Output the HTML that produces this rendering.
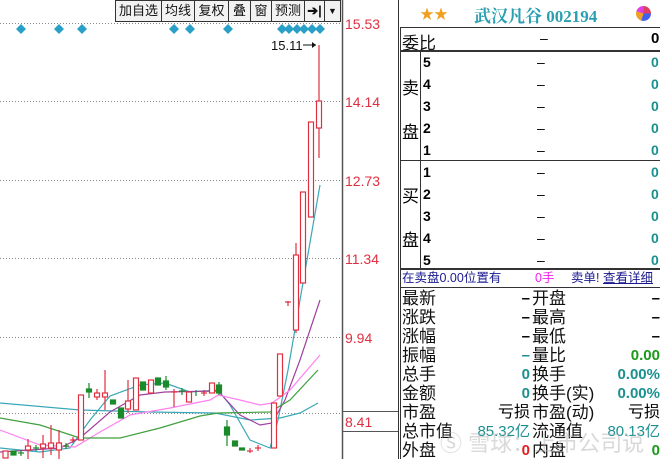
<!DOCTYPE html>
<html><head><meta charset="utf-8"><style>
*{margin:0;padding:0;box-sizing:border-box}
body{width:660px;height:459px;background:#fff;position:relative;overflow:hidden;font-family:"Liberation Sans","Noto Sans CJK SC",sans-serif}
.a{position:absolute;white-space:nowrap}
.btn{position:absolute;top:0;height:22px;border:1px solid #333;background:#f2f2f2;font-size:13px;line-height:20px;text-align:center;color:#111}
.ax{position:absolute;left:345px;font-size:14px;color:#e03040}
.ob{position:absolute;font-size:14px;font-weight:bold;line-height:22px}
.st{position:absolute;font-size:17px;line-height:19px;color:#111}
.v{position:absolute;font-size:15px;font-weight:bold;line-height:19px;text-align:right}
</style></head><body>
<svg class="a" style="left:0;top:0" width="400" height="459">
<g stroke="#888" stroke-dasharray="1,2" stroke-width="1">
<line x1="0" y1="23.5" x2="342" y2="23.5"/><line x1="0" y1="101.5" x2="342" y2="101.5"/><line x1="0" y1="180.5" x2="342" y2="180.5"/><line x1="0" y1="258.5" x2="342" y2="258.5"/><line x1="0" y1="337.5" x2="342" y2="337.5"/><line x1="0" y1="413.5" x2="342" y2="413.5"/>
</g>
<line x1="342.5" y1="0" x2="342.5" y2="459" stroke="#555" stroke-width="1.5"/>
<line x1="342" y1="411.5" x2="398" y2="411.5" stroke="#555"/><line x1="342" y1="431.5" x2="398" y2="431.5" stroke="#555"/>
<g fill="#2a9fc8">
<path d="M21 24l5 5-5 5-5-5z"/><path d="M59 24l5 5-5 5-5-5z"/><path d="M82 24l5 5-5 5-5-5z"/><path d="M174 24l5 5-5 5-5-5z"/><path d="M190 24l5 5-5 5-5-5z"/><path d="M228 24l5 5-5 5-5-5z"/><path d="M282 24l5 5-5 5-5-5z"/><path d="M289 24l5 5-5 5-5-5z"/><path d="M297 24l5 5-5 5-5-5z"/><path d="M304 24l5 5-5 5-5-5z"/><path d="M312 24l5 5-5 5-5-5z"/><path d="M320 24l5 5-5 5-5-5z"/>
</g>
<g fill="none" stroke-width="1.2">
<polyline stroke="#3aa8b8" points="0,403 80,410 150,412 215,413 250,420 280,418 300,413 318,403"/>
<polyline stroke="#3aa8b8" points="0,448 40,452 70,448 90,420 110,396 140,385 165,383 190,392 218,390 230,405 250,440 270,448 278,420 288,370 300,300 320,185"/>
<polyline stroke="#a040a0" points="0,452 60,448 80,438 110,412 140,395 165,392 218,391 240,415 260,425 272,423 285,400 300,360 320,300"/>
<polyline stroke="#ff80f0" points="0,430 40,445 75,447 100,432 130,415 170,408 210,400 218,395 240,400 260,405 272,403 290,390 320,355"/>
<polyline stroke="#40a040" points="0,418 40,425 80,438 120,438 160,428 200,416 218,413 270,412 290,400 318,370"/>
</g>
<g stroke="#e03040" fill="#fff" stroke-width="1.2">
<line x1="28" y1="439" x2="28" y2="459"/><rect x="25.5" y="446" width="5" height="4"/>
<line x1="43" y1="435" x2="43" y2="458"/><rect x="40.5" y="444" width="5" height="4"/>
<line x1="51" y1="425" x2="51" y2="455"/><rect x="48.5" y="443" width="5" height="5"/>
<line x1="59" y1="430" x2="59" y2="459"/><rect x="56.5" y="443" width="5" height="7"/>
<rect x="3" y="451" width="5" height="7"/><line x1="73" y1="437" x2="73" y2="443"/><line x1="70" y1="440" x2="76" y2="440"/>
<rect x="78.5" y="395" width="5" height="45"/>
<line x1="97" y1="389" x2="97" y2="400"/><rect x="94.5" y="393" width="5" height="4"/>
<line x1="105" y1="370" x2="105" y2="410"/><rect x="102.5" y="393" width="5" height="4"/>
<line x1="128" y1="380" x2="128" y2="413"/><rect x="125.5" y="401" width="5" height="8"/>
<rect x="133.5" y="378" width="5" height="32"/>
<rect x="148.5" y="380" width="5" height="13"/>
<line x1="174" y1="389" x2="174" y2="407"/><line x1="171" y1="392" x2="177" y2="392"/>
<rect x="186.5" y="392" width="5" height="10"/>
<line x1="204" y1="390" x2="204" y2="396"/><line x1="201" y1="393" x2="207" y2="393"/>
<rect x="209.5" y="383" width="5" height="10"/>
<line x1="250" y1="448" x2="250" y2="453"/><line x1="247" y1="451" x2="253" y2="451"/>
<line x1="258" y1="445" x2="258" y2="451"/><line x1="255" y1="448" x2="261" y2="448"/>
<rect x="271.5" y="403" width="5" height="45"/>
<rect x="277.5" y="354" width="5" height="42"/>
<line x1="288" y1="301" x2="288" y2="306"/><line x1="285" y1="302" x2="291" y2="302"/>
<line x1="296" y1="243" x2="296" y2="333"/><rect x="293.5" y="255" width="5" height="75"/>
<rect x="300.5" y="192" width="5" height="91"/>
<rect x="308.5" y="122" width="5" height="95"/>
<line x1="319" y1="45" x2="319" y2="158"/><rect x="316.5" y="101" width="5" height="27"/>
</g>
<g fill="#1a8a2a" stroke="#1a8a2a" stroke-width="1.2">
<rect x="11" y="451" width="5" height="4"/><line x1="21" y1="450" x2="21" y2="456"/><line x1="18" y1="453" x2="24" y2="453"/>
<line x1="36" y1="445" x2="36" y2="451"/><line x1="33" y1="448" x2="39" y2="448"/><line x1="66" y1="443" x2="66" y2="449"/><line x1="63" y1="446" x2="69" y2="446"/>
<line x1="89" y1="383" x2="89" y2="398"/><rect x="86.5" y="389" width="5" height="3"/>
<rect x="110.5" y="400" width="5" height="4"/><rect x="118.5" y="408" width="5" height="10"/>
<rect x="140.5" y="382" width="5" height="8"/><rect x="155.5" y="378" width="5" height="7"/><line x1="166" y1="376" x2="166" y2="390"/><rect x="163.5" y="381" width="5" height="6"/>
<line x1="182" y1="388" x2="182" y2="395"/><line x1="179" y1="391" x2="185" y2="391"/><line x1="196" y1="390" x2="196" y2="396"/>
<line x1="219" y1="382" x2="219" y2="395"/><rect x="216.5" y="385" width="5" height="8"/>
<line x1="227" y1="420" x2="227" y2="446"/><rect x="224.5" y="427" width="5" height="8"/>
<rect x="232.5" y="441" width="5" height="5"/><rect x="239.5" y="448" width="5" height="2"/>
</g>
<text x="271" y="50" font-size="13" fill="#111" font-family="Liberation Sans">15.11</text>
<line x1="303" y1="45" x2="316" y2="45" stroke="#111"/><path d="M316 45l-4-3v6z" fill="#111"/>
</svg>
<div class="btn" style="left:115px;width:47px">加自选</div>
<div class="btn" style="left:161px;width:34px">均线</div>
<div class="btn" style="left:194px;width:35px">复权</div>
<div class="btn" style="left:228px;width:23px">叠</div>
<div class="btn" style="left:250px;width:22px">窗</div>
<div class="btn" style="left:271px;width:34px">预测</div>
<div class="btn" style="left:304px;width:21px;font-weight:bold">➔|</div>
<div class="btn" style="left:324px;width:17px;font-size:9px">▼</div>
<div class="ax" style="top:16px">15.53</div>
<div class="ax" style="top:94px">14.14</div>
<div class="ax" style="top:173px">12.73</div>
<div class="ax" style="top:251px">11.34</div>
<div class="ax" style="top:330px">9.94</div>
<div class="ax" style="top:414px">8.41</div>
<div class="a" style="left:398px;top:0;width:1px;height:459px;background:#333"></div>
<div class="a" style="left:420px;top:4px;color:#f0a020;font-size:14px">★★</div>
<div class="a" style="left:474px;top:2px;color:#2a9fb0;font-size:17px;font-weight:bold;font-family:'Liberation Serif','Noto Serif CJK SC',serif">武汉凡谷 002194</div>
<div class="a" style="left:636px;top:6px;width:15px;height:15px;border-radius:50%;background:conic-gradient(#e04060 0 25%,#4060f0 0 55%,#f0a020 0 80%,#e040e0 0)"></div>
<div class="a" style="left:400px;top:27px;width:260px;height:432px;border-left:1px solid #333;border-top:1px solid #333"></div>
<div class="a" style="left:400px;top:50px;width:260px;height:2px;background:#333"></div>
<div class="a" style="left:400px;top:160px;width:260px;height:1px;background:#333"></div>
<div class="a" style="left:400px;top:268px;width:260px;height:2px;background:#333"></div>
<div class="a" style="left:400px;top:287px;width:260px;height:1px;background:#333"></div>
<div class="a" style="left:420px;top:52px;width:1px;height:216px;background:#333"></div>
<div class="a" style="left:402px;top:29px;font-size:17px;color:#111">委比</div>
<div class="a" style="left:540px;top:30px;font-size:14px">–</div>
<div class="a" style="left:651px;top:30px;font-size:15px;font-weight:bold">0</div>
<div class="a" style="left:402px;top:78px;font-size:17px;line-height:22px;width:18px">卖<br><br>盘</div>
<div class="a" style="left:402px;top:186px;font-size:17px;line-height:22px;width:18px">买<br><br>盘</div>
<div class="ob" style="left:423px;top:51px">5<br>4<br>3<br>2<br>1</div>
<div class="ob" style="left:423px;top:161px">1<br>2<br>3<br>4<br>5</div>
<div class="ob" style="left:537px;top:51px;font-weight:normal">–<br>–<br>–<br>–<br>–</div>
<div class="ob" style="left:537px;top:161px;font-weight:normal">–<br>–<br>–<br>–<br>–</div>
<div class="ob" style="left:651px;top:51px;color:#1a9090">0<br>0<br>0<br>0<br>0</div>
<div class="ob" style="left:651px;top:161px;color:#1a9090">0<br>0<br>0<br>0<br>0</div>
<div class="a" style="left:402px;top:270px;font-size:12.5px;color:#1a1a90;line-height:16px">在卖盘0.00位置有</div>
<div class="a" style="left:535px;top:270px;font-size:12.5px;color:#f020f0;line-height:16px">0手</div>
<div class="a" style="left:571px;top:270px;font-size:12.5px;color:#1a1a90;line-height:16px">卖单! <u>查看详细</u></div>
<div class="st" style="left:402px;top:289px">最新<br>涨跌<br>涨幅<br>振幅<br>总手<br>金额<br>市盈<br>总市值<br>外盘</div>
<div class="st" style="left:532px;top:289px">开盘<br>最高<br>最低<br>量比<br>换手<br>换手(实)<br>市盈(动)<br>流通值<br>内盘</div>
<div class="v" style="left:470px;top:289px;width:60px">–<br>–<br>–<br><span style="color:#1a9090">–</span><br><span style="color:#1a9090">0</span><br><span style="color:#1a9090">0</span><br><span style="font-weight:normal;font-size:16px">亏损</span><br><span style="color:#1a9090;font-weight:normal">85.32亿</span><br><span style="color:#e02020">0</span></div>
<div class="v" style="left:590px;top:289px;width:70px">–<br>–<br>–<br><span style="color:#1a9a1a">0.00</span><br><span style="color:#1a9090">0.00%</span><br><span style="color:#1a9090">0.00%</span><br><span style="font-weight:normal;font-size:16px">亏损</span><br><span style="color:#1a9090;font-weight:normal">80.13亿</span><br><span style="color:#1a9a1a">0</span></div>
<div class="a" style="left:440px;top:426px;font-size:22px;color:rgba(180,180,180,0.5)">Ⓢ 雪球：上市公司说</div>
</body></html>
